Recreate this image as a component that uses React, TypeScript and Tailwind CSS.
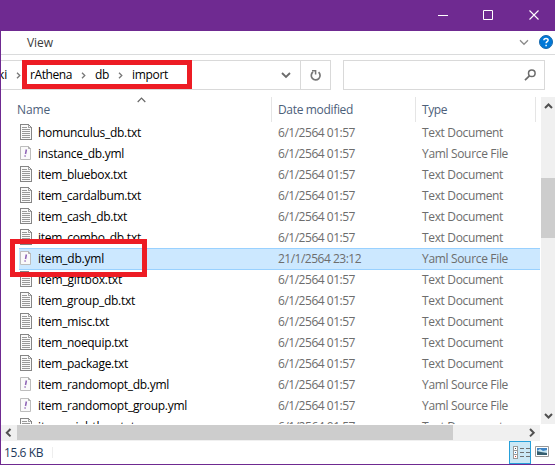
import { useLayoutEffect, useRef, useState } from "react";

// Label whose tracking is adjusted so that it fills the given width.
function Label({ text, width, className = "" }: { text: string; width: number; className?: string }) {
  const ref = useRef<HTMLSpanElement>(null);
  const [tracking, setTracking] = useState(0);
  useLayoutEffect(() => {
    if (ref.current) {
      const natural = ref.current.getBoundingClientRect().width - tracking * text.length;
      setTracking((width - natural) / text.length);
    }
  }, [text, width]);
  return (
    <span ref={ref} className={`inline-block shrink-0 whitespace-pre ${className}`} style={{ letterSpacing: tracking }}>
      {text}
    </span>
  );
}

function TextIcon() {
  return (
    <svg width="13" height="17" viewBox="0 0 13 17" shapeRendering="crispEdges" className="shrink-0">
      <path d="M.5 .5H8.500L11.500 3.500V15.500H.5Z" fill="#fafafa" stroke="#858585" />
      <path d="M8 1H9V3H11V4H8Z" fill="#a5a5a5" />
      <path d="M2 3.500H7M2 5.500H10M2 7.500H10M2 9.500H10M2 11.500H10M2 13.500H10" stroke="#999" />
    </svg>
  );
}

function YamlIcon() {
  return (
    <svg width="13" height="17" viewBox="0 0 13 17" className="shrink-0">
      <path d="M.5 1.500H8.500L10.500 3.500V14.500H.5Z" fill="#fafafa" stroke="#bdbdbd" />
      <path d="M8.500 1.500V3.500H10.500" fill="none" stroke="#aaa" />
      <path d="M6.400 4.500L5.500 9" stroke="#8d62b5" strokeWidth="1.500" />
      <path d="M5.200 10.400L5 11.700" stroke="#8d62b5" strokeWidth="1.500" />
    </svg>
  );
}

type Row = { name: string; w: number; yaml?: boolean; selected?: boolean };
const rows: Row[] = [
  { name: "homunculus_db.txt", w: 103 },
  { name: "instance_db.yml", w: 86, yaml: true },
  { name: "item_bluebox.txt", w: 89 },
  { name: "item_cardalbum.txt", w: 103 },
  { name: "item_cash_db.txt", w: 89 },
  { name: "item_combo_db.txt", w: 103 },
  { name: "item_db.yml", w: 66, yaml: true, selected: true },
  { name: "item_giftbox.txt", w: 84 },
  { name: "item_group_db.txt", w: 97 },
  { name: "item_misc.txt", w: 71 },
  { name: "item_noequip.txt", w: 90 },
  { name: "item_package.txt", w: 90 },
  { name: "item_randomopt_db.yml", w: 131, yaml: true },
  { name: "item_randomopt_group.yml", w: 149, yaml: true },
  { name: "item_nightbox.txt", w: 97 },
];

function FileRow({ row }: { row: Row }) {
  return (
    <div className={`flex h-[21px] shrink-0 items-center ${row.selected ? "bg-[#cce8ff] shadow-[inset_0_1px_#99d1ff,0_1px_#99d1ff]" : ""}`}>
      <div className="flex w-[259px] shrink-0 items-center gap-[5px] pl-[1px]">
        {row.yaml ? <YamlIcon /> : <TextIcon />}
        <Label text={row.name} width={row.w} className="text-black" />
      </div>
      <div className="w-[144px] shrink-0 text-[#6d6d6d]">
        <Label text={row.selected ? "21/1/2564 23:12" : "6/1/2564 01:57"} width={row.selected ? 83 : 77} />
      </div>
      <div className="text-[#6d6d6d]">
        <Label text={row.yaml ? "Yaml Source File" : "Text Document"} width={row.yaml ? 86 : 81} />
      </div>
    </div>
  );
}

function Crumb({ className = "" }: { className?: string }) {
  return (
    <svg width="5" height="7" viewBox="0 0 5 7" className={`shrink-0 ${className}`}>
      <path d="M1 .7L3.800 3.500L1 6.300" fill="none" stroke="#777" strokeWidth="1.300" />
    </svg>
  );
}

function Chevron({ className }: { className: string }) {
  return (
    <svg width="10" height="7" viewBox="0 0 10 7" className={`shrink-0 ${className}`}>
      <path d="M1 1.300L5 5.300L9 1.300" fill="none" stroke="currentColor" strokeWidth="1.300" />
    </svg>
  );
}

export default function App() {
  return (
    <div className="relative flex h-[465px] w-[555px] flex-col overflow-hidden bg-white font-['Open_Sans','Noto_Sans',sans-serif] text-[12px] leading-[16px]">
      <div className="flex h-[31px] shrink-0 bg-[#6f2a91]">
        <svg width="555" height="31" viewBox="0 0 555 31" fill="none" stroke="#fff">
          <path d="M438 15.500H448" />
          <path d="M483.500 10.500H492.500V19.500H483.500Z" />
          <path d="M529.500 10.500L538.500 19.500M538.500 10.500L529.500 19.500" strokeWidth="1.100" />
        </svg>
      </div>
      <div className="flex min-h-0 flex-1 flex-col border-b border-l border-[#6f2a91]">
        <div className="flex h-[24px] shrink-0 items-center border-b border-[#dadbdc] pl-[26px]">
          <Label text="View" width={26} className="text-[#3b3b3b]" />
          <Chevron className="mr-[10px] ml-auto text-[#8b8b8b]" />
          <svg width="14" height="14" viewBox="0 0 14 14" className="mr-[2px] mb-px">
            <circle cx="7" cy="7" r="6.500" fill="#0078d7" stroke="#1768ac" />
            <path d="M4.900 5.200C4.900 2.800 9.200 2.900 9.100 5.200C9 6.600 7.100 6.800 7.100 8.300M7.100 9.700V11.200" fill="none" stroke="#fff" strokeWidth="1.500" />
          </svg>
        </div>
        <div className="flex h-[42px] shrink-0 pt-[5px]">
          <div className="flex h-[30px] w-[330px] shrink-0 items-center border-y border-r border-[#d9d9d9] text-black">
            <div className="flex w-[15px] shrink-0 justify-end overflow-hidden pr-[9px]">
              <Label text="ki" width={9} />
            </div>
            <Crumb />
            <Label text="rAthena" width={42} className="ml-[9px]" />
            <Crumb className="ml-[9px]" />
            <Label text="db" width={14} className="ml-[9px]" />
            <Crumb className="ml-[9px]" />
            <Label text="import" width={36} className="ml-[9px]" />
            <div className="ml-auto flex h-full w-[59px] shrink-0">
              <div className="flex w-[30px] items-center justify-center border-r border-[#d9d9d9]">
                <svg width="10" height="7" viewBox="0 0 10 7">
                  <path d="M1 1L5 5L9 1" fill="none" stroke="#6b6b6b" strokeWidth="1.800" />
                </svg>
              </div>
              <svg width="29" height="28" viewBox="0 0 29 28" fill="none" stroke="#777">
                <path d="M17.600 11.200A4.400 4.400 0 1 1 12 11" strokeWidth="1.700" />
                <path d="M11 9.800H14.600V13.600" strokeWidth="1.500" />
              </svg>
            </div>
          </div>
          <div className="ml-[12px] flex h-[30px] w-[202px] items-center justify-end border border-[#d9d9d9] pr-[8px]">
            <svg width="12" height="12" viewBox="0 0 12 12" fill="none" stroke="#6b6b6b">
              <circle cx="7.800" cy="4.300" r="3.300" strokeWidth="1.500" />
              <path d="M5.400 6.800L1 11.200" strokeWidth="1.700" />
            </svg>
          </div>
        </div>
        <div className="flex h-[328px] shrink-0">
          <div className="flex w-[540px] shrink-0 flex-col overflow-hidden">
            <div className="flex h-[25px] shrink-0 text-[#4c607a]">
              <div className="flex w-[271px] items-center border-r border-[#e5e5e5] pl-[16px]">
                <Label text="Name" width={33} className="mt-px" />
                <svg width="9" height="6" viewBox="0 0 9 6" className="mb-[20px] ml-[87px]">
                  <path d="M.7 5L4.500 1.200L8.300 5" fill="none" stroke="#666" strokeWidth="1.200" />
                </svg>
              </div>
              <div className="flex w-[144px] items-center border-r border-[#e5e5e5] pl-[6px]">
                <Label text="Date modified" width={75} className="mt-px" />
              </div>
              <div className="flex w-[120px] items-center border-r border-[#e5e5e5] pl-[6px]">
                <Label text="Type" width={25} className="mt-px" />
              </div>
            </div>
            <div className="ml-[18px] flex h-[302px] w-[521px] flex-col overflow-hidden">
              {rows.map((row) => <FileRow key={row.name} row={row} />)}
            </div>
          </div>
          <div className="flex h-[327px] w-[14px] shrink-0 flex-col bg-[#f0f0f0] text-[#505050]">
            <svg width="14" height="81" viewBox="0 0 14 81">
              <path d="M4 11L7.500 7.500L11 11" fill="none" stroke="currentColor" strokeWidth="2" />
            </svg>
            <div className="h-[60px] bg-[#cdcdcd]" />
            <svg width="14" height="14" viewBox="0 0 14 14" className="mt-auto mb-[1px]">
              <path d="M4 5L7.500 8.500L11 5" fill="none" stroke="currentColor" strokeWidth="2" />
            </svg>
          </div>
        </div>
        <div className="flex h-[16px] w-[539px] shrink-0 bg-[#f0f0f0]">
          <svg width="16" height="16" viewBox="0 0 16 16">
            <path d="M9.500 4L5.800 7.700L9.500 11.400" fill="none" stroke="#505050" strokeWidth="2" />
          </svg>
          <div className="h-[15px] w-[436px] bg-[#cdcdcd]" />
          <svg width="87" height="16" viewBox="0 0 87 16">
            <path d="M77 4L80.700 7.700L77 11.400" fill="none" stroke="#505050" strokeWidth="2" />
          </svg>
        </div>
        <div className="flex min-h-0 flex-1 items-center pl-[3px]">
          <Label text="15.6 KB" width={39} className="text-[#1e395b]" />
          <div className="ml-[9px] h-[11px] w-px bg-[#eee]" />
          <div className="mr-[4px] ml-auto h-[23px] w-[22px] border border-[#26a0da] bg-[#cbe8f6]">
            <svg width="20" height="21" viewBox="0 0 20 21" shapeRendering="crispEdges">
              <path d="M3.500 4.500H7.500V16.500H3.500ZM3.500 8.500H7.500M3.500 12.500H7.500" fill="#fff" stroke="#999" />
              <path d="M10 6.500H14M16 6.500H20M10 10.500H14M16 10.500H20M10 14.500H14M16 14.500H20" stroke="#707070" />
              <path d="M5 6h1v1H5Z" fill="#555" />
              <path d="M5 10h1v1H5Z" fill="#2878c8" />
              <path d="M5 14h1v1H5Z" fill="#d34132" />
            </svg>
          </div>
          <svg width="14" height="12" viewBox="0 0 14 12" className="mr-[6px] mb-[1px]">
            <path d="M.5 .5H13.500V10.500H.5Z" fill="#fff" stroke="#999" />
            <path d="M2 2H12V9H2Z" fill="#3e83c4" />
            <path d="M2 5L5 3L8 5L12 4V7H2Z" fill="#c6e5f2" />
            <path d="M2 5L6 6L12 7V9H2Z" fill="#365f70" />
          </svg>
        </div>
      </div>
      <div className="absolute top-[60px] left-[22px] h-[29px] w-[170px] border-[5px] border-[#ed1c24]" />
      <div className="absolute top-[239px] left-[10px] h-[38px] w-[137px] border-[5px] border-[#ed1c24]" />
    </div>
  );
}
